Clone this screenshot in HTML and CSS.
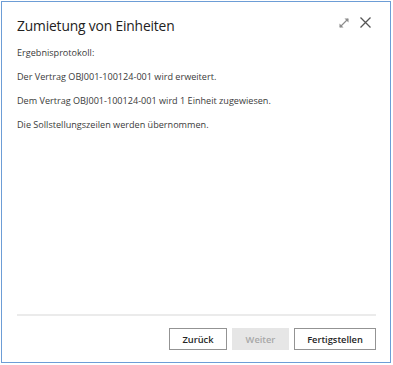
FILE: index.html
```html
<!DOCTYPE html>
<html lang="de">
<head>
<meta charset="utf-8">
<title>Zumietung von Einheiten</title>
<link rel="stylesheet" href="styles.css">
</head>
<body>
<div class="frame">
  <div class="header">
    <h1 class="title">Zumietung von Einheiten</h1>
    <div class="tools">
      <svg class="icon-expand" width="12" height="12" viewBox="0 0 12 12" aria-hidden="true">
        <path d="M2 10 L10 2" fill="none" stroke="#8c8c8c" stroke-width="1.1"/>
        <path d="M6.5 1.5 H10.5 V5.5 Z M1.5 6.5 V10.5 H5.5 Z" fill="#8c8c8c" stroke="none"/>
      </svg>
      <svg class="icon-close" width="13" height="13" viewBox="0 0 13 13" aria-hidden="true">
        <path d="M1.5 1.5 L11.5 11.5 M11.5 1.5 L1.5 11.5" fill="none" stroke="#555" stroke-width="1.3"/>
      </svg>
    </div>
  </div>
  <div class="content">
    <p class="line first">Ergebnisprotokoll:</p>
    <p class="line">Der Vertrag OBJ001-100124-001 wird erweitert.</p>
    <p class="line">Dem Vertrag OBJ001-100124-001 wird 1 Einheit zugewiesen.</p>
    <p class="line">Die Sollstellungszeilen werden übernommen.</p>
  </div>
  <div class="separator"></div>
  <div class="footer">
    <button class="btn">Zurück</button>
    <button class="btn disabled">Weiter</button>
    <button class="btn wide">Fertigstellen</button>
  </div>
</div>
</body>
</html>
```

FILE: styles.css
```css
html, body {
  margin: 0;
  padding: 0;
  background: #ffffff;
}

body {
  font-family: "Open Sans", "Noto Sans", sans-serif;
  color: #333333;
}

.frame {
  box-sizing: border-box;
  margin: 1px 0 0 1px;
  width: 390px;
  height: 362px;
  border: 1px solid #6d9dd6;
  display: flex;
  flex-direction: column;
  padding: 0 14px 0 15px;
  background: #ffffff;
}

.header {
  display: flex;
  align-items: flex-start;
  justify-content: space-between;
  height: 38px;
}

.title {
  margin: 13px 0 0 0;
  font-size: 13.8px;
  font-weight: 500;
  color: #222222;
  letter-spacing: -0.15px;
  line-height: 22px;
}

.tools {
  display: flex;
  align-items: center;
  gap: 9px;
  margin-top: 14px;
  margin-right: 4px;
}

.icon-expand,
.icon-close {
  display: block;
}

.content {
  flex: 1;
}

.line {
  margin: 0 0 10px 0;
  font-size: 9.1px;
  line-height: 14px;
  color: #3a3a3a;
}

.line.first {
  margin-top: 6px;
}

.separator {
  height: 2px;
  background: #ebebeb;
}

.footer {
  display: flex;
  justify-content: flex-end;
  gap: 5px;
  padding: 12px 0 12px 0;
}

.btn {
  box-sizing: border-box;
  height: 22px;
  width: 58px;
  padding: 0;
  border: 1px solid #939393;
  background: #ffffff;
  font-family: "Open Sans", "Noto Sans", sans-serif;
  font-size: 9.3px;
  font-weight: 600;
  color: #262626;
}

.btn.disabled {
  width: 57px;
  border-color: #e6e6e6;
  background: #e6e6e6;
  color: #a8a8a8;
}

.btn.wide {
  width: 82px;
}
```
